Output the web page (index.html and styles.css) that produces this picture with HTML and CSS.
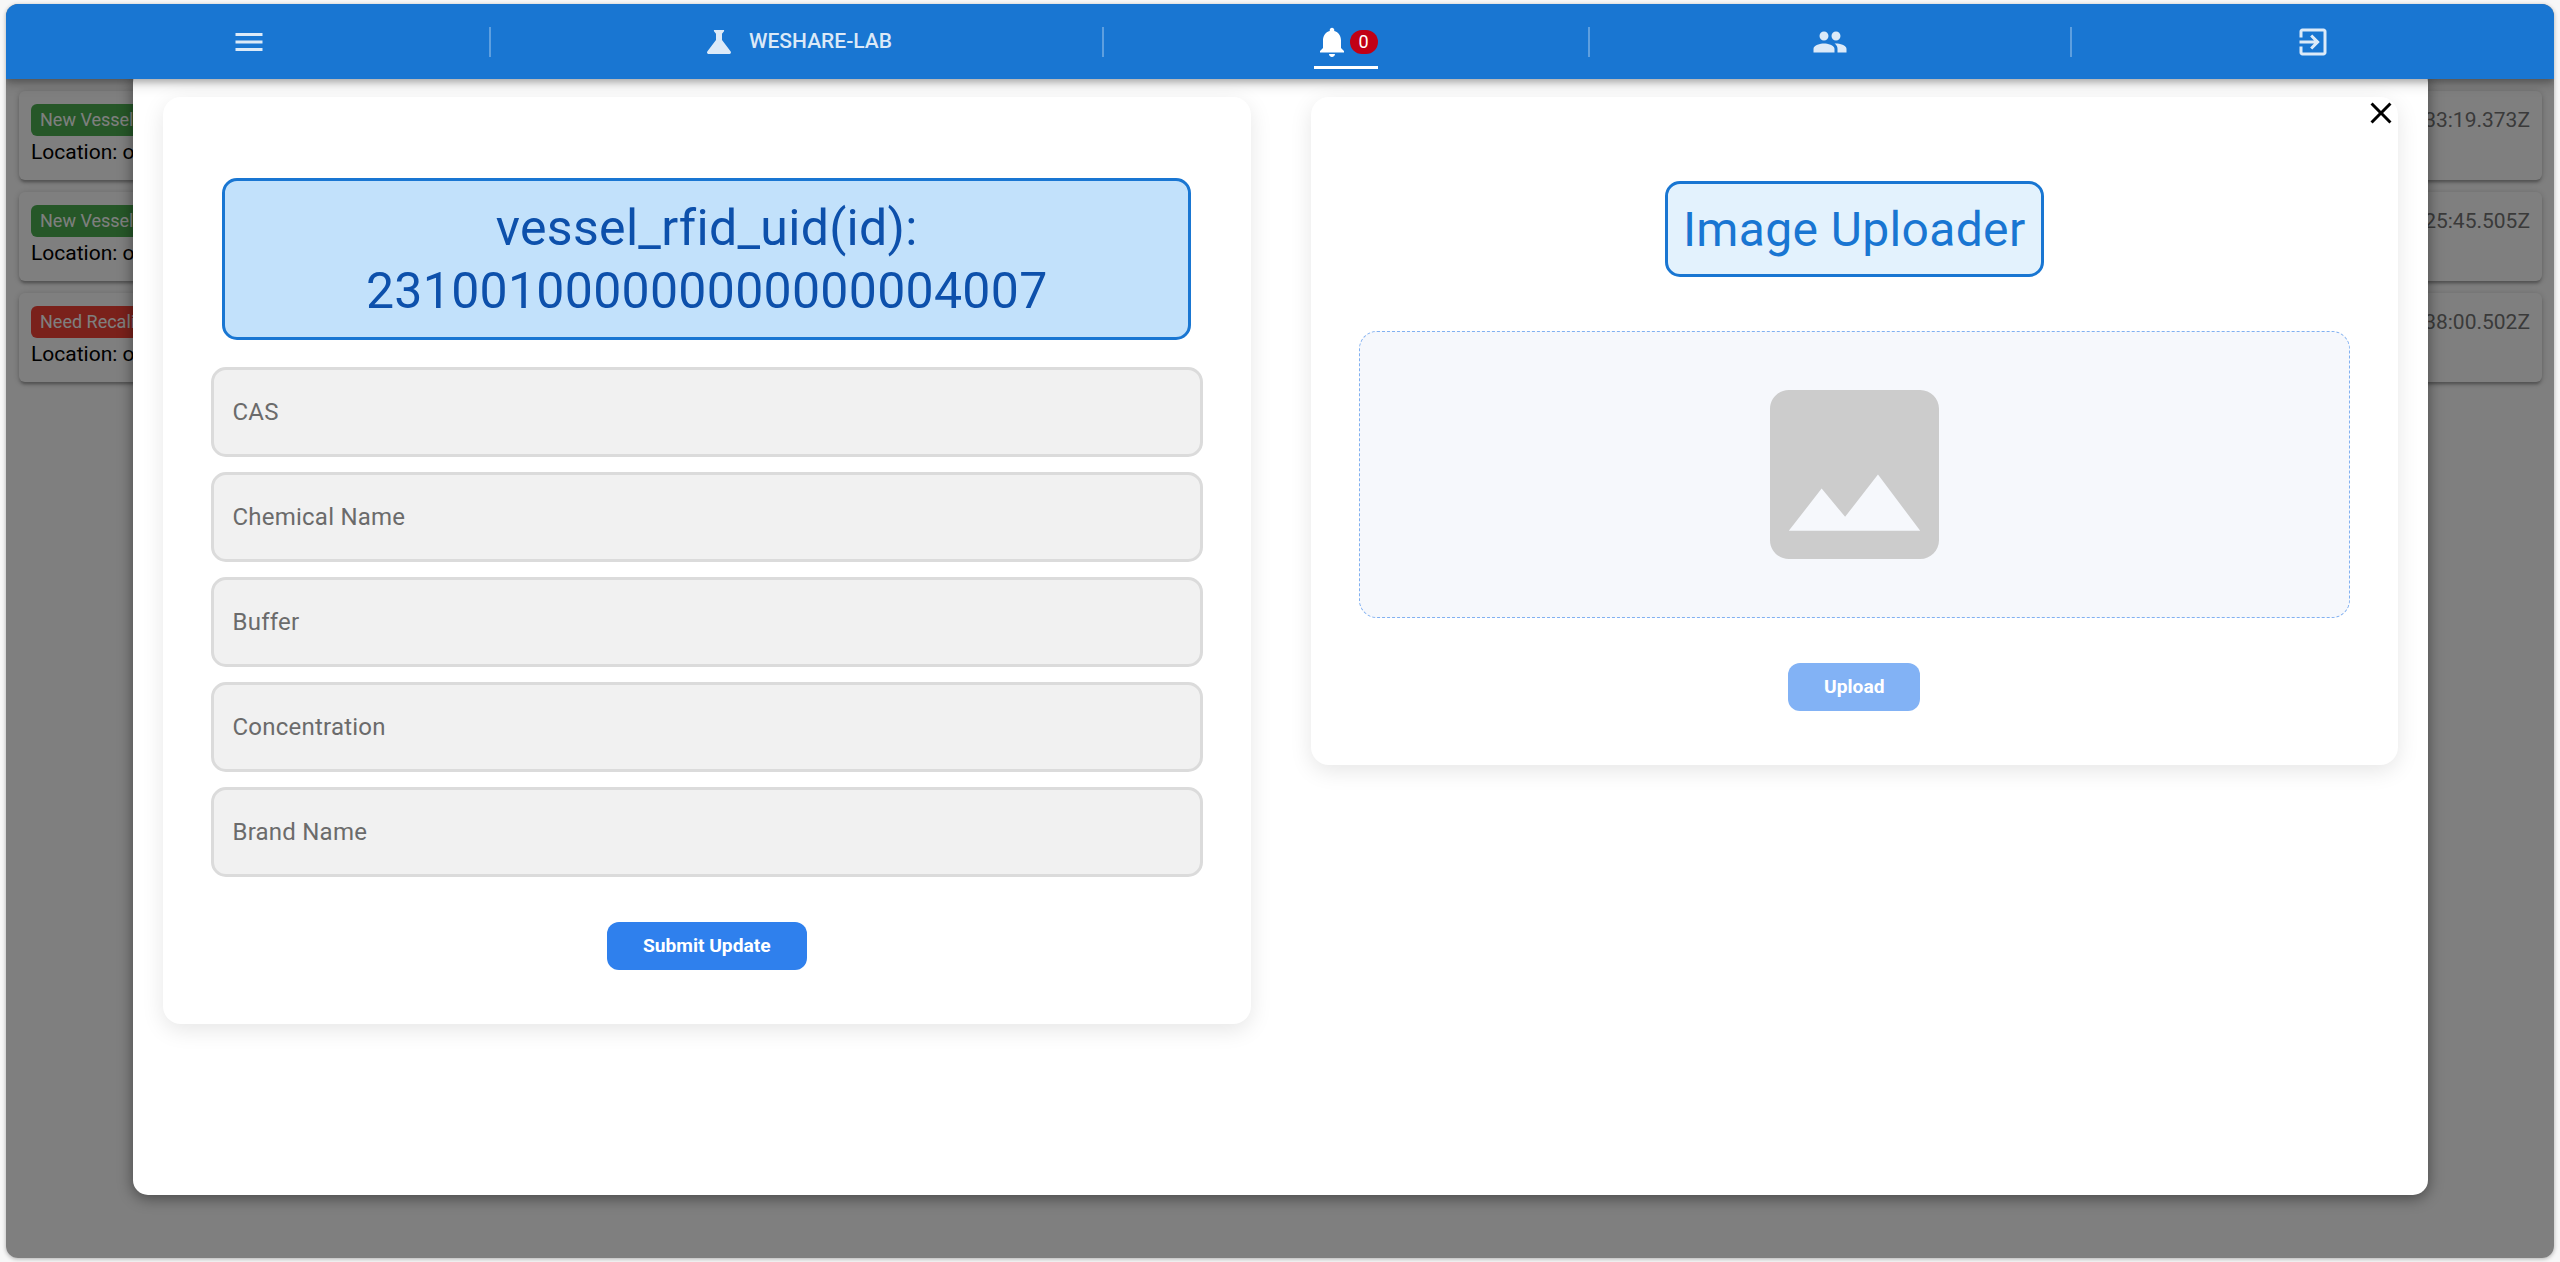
FILE: index.html
```html
<!DOCTYPE html>
<html lang="en">
<head>
<meta charset="utf-8">
<title>WESHARE-LAB</title>
<link rel="stylesheet" href="styles.css">
</head>
<body>
<div class="app">
  <header class="header">
    <nav class="tabs">
      <a class="tab"><svg class="icon" viewBox="0 0 24 24"><path d="M3 18h18v-2H3v2zm0-5h18v-2H3v2zm0-7v2h18V6H3z"/></svg></a>
      <a class="tab tab-brand"><svg class="icon" viewBox="0 0 24 24"><path d="M19.8 18.4 14 10.67V6.5l1.35-1.69c.26-.33.03-.81-.39-.81H9.04c-.42 0-.65.48-.39.81L10 6.5v4.17L4.2 18.4c-.49.66-.02 1.6.8 1.6h14c.82 0 1.29-.94.8-1.6z"/></svg><span>WESHARE-LAB</span></a>
      <a class="tab tab-active"><span class="alert"><svg class="icon" viewBox="0 0 24 24"><path d="M12 22c1.1 0 2-.9 2-2h-4c0 1.1.89 2 2 2zm6-6v-5c0-3.07-1.64-5.64-4.5-6.32V4c0-.83-.67-1.5-1.5-1.5s-1.5.67-1.5 1.5v.68C7.63 5.36 6 7.92 6 11v5l-2 2v1h16v-1l-2-2z"/></svg><span class="badge">0</span></span></a>
      <a class="tab"><svg class="icon" viewBox="0 0 24 24"><path d="M16 11c1.66 0 2.99-1.34 2.99-3S17.66 5 16 5c-1.66 0-3 1.34-3 3s1.34 3 3 3zm-8 0c1.66 0 2.99-1.34 2.99-3S9.66 5 8 5C6.34 5 5 6.34 5 8s1.34 3 3 3zm0 2c-2.33 0-7 1.17-7 3.5V19h14v-2.5c0-2.33-4.67-3.5-7-3.5zm8 0c-.29 0-.62.02-.97.05 1.16.84 1.97 1.97 1.97 3.45V19h6v-2.5c0-2.33-4.67-3.5-7-3.5z"/></svg></a>
      <a class="tab"><svg class="icon" viewBox="0 0 24 24"><path d="M10.09 15.59 11.5 17l5-5-5-5-1.41 1.41L12.67 11H3v2h9.67l-2.58 2.59zM19 3H5c-1.11 0-2 .9-2 2v4h2V5h14v14H5v-4H3v4c0 1.1.89 2 2 2h14c1.1 0 2-.9 2-2V5c0-1.1-.9-2-2-2z"/></svg></a>
    </nav>
  </header>
  <main class="list">
    <article class="item"><div><span class="chip chip-new">New Vessel</span><p>Location: office</p></div><time>2023-10-18T05:33:19.373Z</time></article>
    <article class="item"><div><span class="chip chip-new">New Vessel</span><p>Location: office</p></div><time>2023-10-18T05:25:45.505Z</time></article>
    <article class="item"><div><span class="chip chip-alert">Need Recalibration</span><p>Location: office</p></div><time>2023-10-18T04:38:00.502Z</time></article>
  </main>
  <div class="overlay">
    <section class="dialog">
      <form class="card card-form">
        <h1 class="uid">vessel_rfid_uid(id):<br>231001000000000000004007</h1>
        <label class="field">CAS</label>
        <label class="field">Chemical Name</label>
        <label class="field">Buffer</label>
        <label class="field">Concentration</label>
        <label class="field">Brand Name</label>
        <button type="button" class="btn">Submit Update</button>
      </form>
      <div class="card card-upload">
        <h2 class="upload-title">Image Uploader</h2>
        <div class="dropzone"><svg class="placeholder" viewBox="3 3 18 18"><path d="M21 19V5c0-1.1-.9-2-2-2H5c-1.1 0-2 .9-2 2v14c0 1.1.9 2 2 2h14c1.1 0 2-.9 2-2zM8.5 13.5l2.500 3.010L14.500 12l4.500 6H5l3.500-4.500z"/></svg></div>
        <button type="button" class="btn btn-disabled">Upload</button>
      </div>
      <svg class="close" viewBox="0 0 24 24"><path d="M19 6.410 17.590 5 12 10.590 6.410 5 5 6.410 10.590 12 5 17.590 6.410 19 12 13.410 17.590 19 19 17.590 13.410 12z"/></svg>
    </section>
  </div>
</div>
</body>
</html>
```
FILE: styles.css
```css
* { box-sizing: border-box; }
body { margin: 0; height: 1262px; padding: 4px 6px; background: #f7f7f7; font-family: Roboto, "Liberation Sans", sans-serif; overflow: hidden; }
h1, h2, p { margin: 0; font-weight: 400; }

.app { position: relative; height: 1254px; border-radius: 12px; background: #fff; overflow: hidden; box-shadow: 0 1px 4px rgba(0,0,0,.3); }

.header { position: relative; z-index: 3; height: 75px; background: #1976d2; box-shadow: 0 3px 6px rgba(0,0,0,.2), 0 5px 12px rgba(0,0,0,.18); }
.tabs { display: grid; grid-template-columns: 483fr 613fr 486fr 482fr 484fr; height: 100%; }
.tab { position: relative; display: flex; align-items: center; justify-content: center; padding-left: 2px; color: rgba(255,255,255,.85); }
.tab + .tab::before { content: ""; position: absolute; left: 0; top: 23px; width: 2px; height: 30px; background: rgba(255,255,255,.3); }
.tab-brand { gap: 12px; font-size: 21px; font-weight: 500; line-height: 36px; }
.tab-brand span { position: relative; top: -1px; }
.tab-active { padding-left: 1px; color: #fff; }
.icon { width: 36px; height: 36px; fill: currentColor; }
.alert { position: relative; display: flex; align-items: center; height: 100%; }
.alert::after { content: ""; position: absolute; left: 0; right: 0; bottom: 10px; height: 3px; background: #fff; }
.badge { height: 24px; min-width: 28px; border-radius: 12px; background: #c10015; font-size: 18px; line-height: 24px; text-align: center; }

.list { display: flex; flex-direction: column; gap: 12px; padding: 12px 12px 12px 13px; }
.item { display: flex; justify-content: space-between; height: 89px; padding: 12px; border-radius: 6px; background: #fff; box-shadow: 0 1px 7px rgba(0,0,0,.2), 0 3px 3px rgba(0,0,0,.14), 0 4px 2px -2px rgba(0,0,0,.12); font-size: 21px; line-height: 32px; color: #000; }
.item time { padding-top: 1px; color: #757575; }
.chip { display: inline-block; height: 32px; padding: 0 9px; border-radius: 6px; color: #fff; font-size: 18px; }
.chip-new { background: #4caf50; }
.chip-alert { background: #f44336; }

.overlay { position: absolute; inset: 0; z-index: 2; padding: 63px 126px 63px 127px; background: rgba(0,0,0,.5); }
.dialog { position: relative; display: flex; gap: 60px; align-items: flex-start; height: 1128px; padding: 30px; border-radius: 15px; background: #fff; box-shadow: 0 3px 15px rgba(0,0,0,.45); }
.card { flex: 1 1 0; display: flex; flex-direction: column; align-items: center; border-radius: 18px; background: #fff; box-shadow: 0 6px 22px rgba(0,0,0,.1); }
.card > * { flex-shrink: 0; }
.card-form { height: 927px; padding: 81px 48px 0; }
.uid { width: 969px; height: 162px; margin-bottom: 27px; padding: 16px 0; border: 3px solid #1976d2; border-radius: 15px; background: #c2e1fb; color: #0d50ab; font-size: 50px; line-height: 62.5px; letter-spacing: .006em; text-align: center; }
.field { display: flex; align-items: center; width: 100%; height: 90px; margin: 0 0 15px; padding-left: 18.5px; border: 3px solid #dbdbdb; border-radius: 15px; background: #f1f1f1; color: #6b6b6b; font-size: 24px; letter-spacing: .0094em; }
.btn { height: 48px; padding: 0 36px 2px; border: 0; border-radius: 12px; background: #2f80ed; color: #fff; font: 700 19.2px Roboto, sans-serif; }
.card-form .btn { margin-top: 30px; }

.card-upload { height: 668px; padding: 84px 48px 0; }
.upload-title { height: 96px; padding: 0 15px; border: 3px solid #1976d2; border-radius: 15px; background: #e3f2fd; color: #1976d2; font-size: 48px; line-height: 91px; letter-spacing: .0074em; }
.dropzone { display: flex; align-items: center; justify-content: center; width: 100%; height: 287px; margin: 54px 0 45px; border: 1px dashed #82b1f1; border-radius: 18px; background: #f6f8fc; }
.placeholder { width: 169px; height: 169px; fill: #ccc; }
.btn-disabled { background: #82b2f5; }
.close { position: absolute; top: 28px; right: 29px; width: 36px; height: 36px; fill: #000; }
```
